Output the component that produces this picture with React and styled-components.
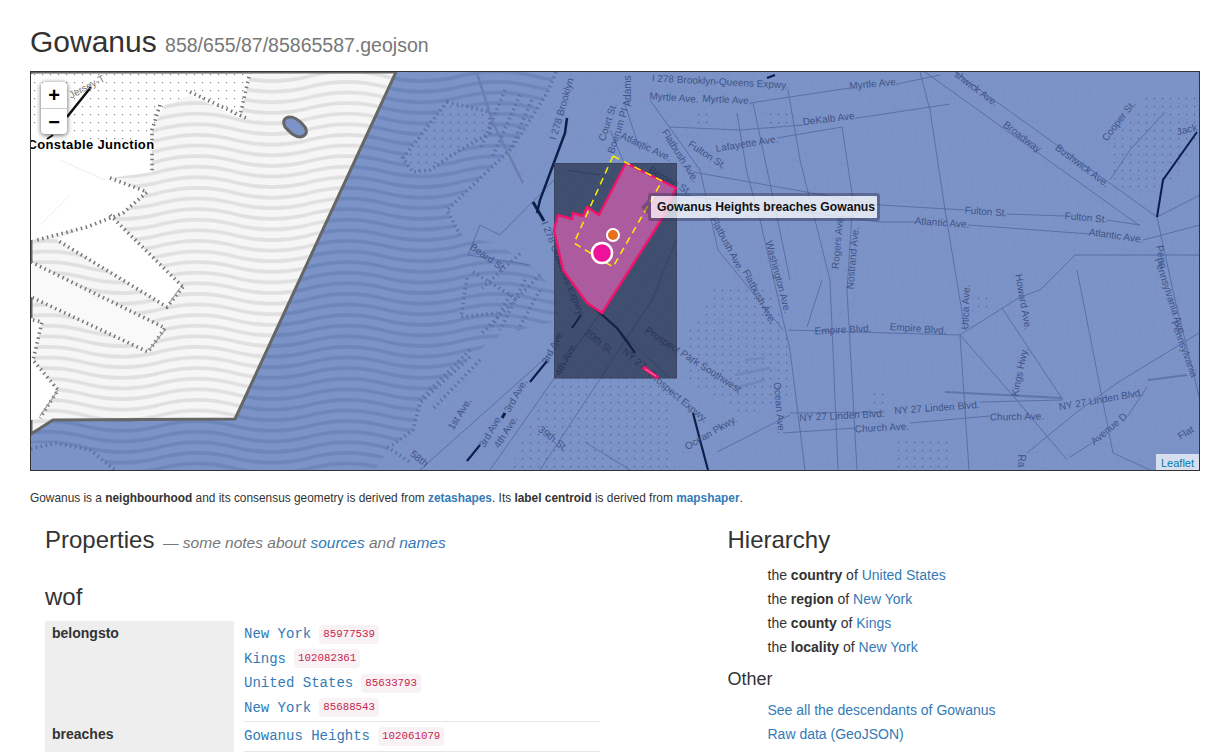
import React from "react";
import styled, { createGlobalStyle } from "styled-components";

const Global = createGlobalStyle`
  html, body { margin: 0; padding: 0; background: #fff; height: 752px; overflow: hidden; }
  body { font-family: "Liberation Sans", Arial, sans-serif; font-size: 14px; line-height: 20px; color: #333; }
`;

const Page = styled.div`
  width: 1170px;
  margin-left: 30px;
`;
const Title = styled.h1`
  margin: 0;
  padding-top: 24px;
  height: 71px;
  box-sizing: border-box;
  font-size: 30px;
  line-height: 36px;
  font-weight: 400;
  color: #333;
`;
const Path = styled.small`
  font-size: 19.5px;
  color: #777;
`;
const MapFrame = styled.div`
  position: relative;
  box-sizing: border-box;
  width: 1170px;
  height: 400px;
  border: 1px solid #333;
  overflow: hidden;
`;
const MapSvg = styled.svg`
  display: block;
  width: 1168px;
  height: 398px;
  font-family: "Liberation Sans", Arial, sans-serif;
`;
const ZoomBox = styled.div`
  position: absolute;
  left: 10px;
  top: 10px;
  width: 26px;
  border-radius: 4px;
  box-shadow: 0 1px 5px rgba(0, 0, 0, 0.65);
  background: #fff;
  overflow: hidden;
`;
const ZoomButton = styled.div`
  height: 25.5px;
  text-align: center;
  font: bold 20px/26px "Liberation Sans", sans-serif;
  color: #000;
  border-bottom: ${(p) => (p.$first ? "1px solid #ccc" : "none")};
`;
const Tip = styled.div`
  position: absolute;
  left: 620px;
  top: 124px;
  height: 22px;
  width: 226px;
  box-sizing: border-box;
  padding-left: 6px;
  font-size: 12.2px;
  font-weight: 700;
  line-height: 22px;
  color: #111;
  white-space: nowrap;
  background: rgba(255, 255, 255, 0.74);
  box-shadow: 0 0 0 3px rgba(50, 55, 90, 0.45);
  border-radius: 1px;
  &::before {
    content: "";
    position: absolute;
    left: -10px;
    top: 4px;
    border: 7px solid transparent;
    border-left-width: 0;
    border-right-color: rgba(50, 55, 90, 0.45);
  }
`;
const Attribution = styled.div`
  position: absolute;
  right: 0;
  bottom: 0;
  height: 16px;
  padding: 0 5px;
  font-size: 11px;
  line-height: 18px;
  color: #0078a8;
  background: rgba(255, 255, 255, 0.7);
`;
const Intro = styled.p`
  margin: 0;
  height: 53px;
  padding-top: 17px;
  box-sizing: border-box;
  font-size: 11.88px;
  line-height: 20px;
  white-space: nowrap;
  color: #333;
  b { font-weight: 700; }
`;
const Link = styled.a`
  color: #337ab7;
  text-decoration: none;
  font-weight: ${(p) => (p.$bold ? 700 : "inherit")};
`;
const Columns = styled.div`
  display: flex;
`;
const LeftCol = styled.section`
  width: 682.5px;
  box-sizing: border-box;
  padding-left: 15px;
`;
const RightCol = styled.section`
  flex: 1;
  padding-left: 15px;
`;
const H2 = styled.h2`
  margin: 0;
  font-size: 24px;
  line-height: 32px;
  font-weight: 400;
  height: 32px;
`;
const Note = styled.small`
  margin-left: 2px;
  font-size: 15.5px;
  font-style: italic;
  color: #777;
`;
const H3 = styled.h3`
  margin: 25px 0 0;
  height: 40px;
  font-size: 24px;
  line-height: 32px;
  font-weight: 400;
`;
const Table = styled.div`
  width: 555px;
  display: grid;
  grid-template-columns: 189px 356px;
  column-gap: 10px;
`;
const Key = styled.div`
  background: #eee;
  padding: 2px 0 0 7px;
  font-weight: 700;
  font-size: 14px;
  line-height: 20px;
  color: #333;
`;
const Cell = styled.div`
  border-bottom: 1px solid #e6e6e6;
  padding-bottom: ${(p) => p.$bottom}px;
  padding-top: ${(p) => p.$top}px;
`;
const Item = styled.div`
  display: flex;
  align-items: center;
  height: 24.5px;
`;
const MonoLink = styled.a`
  font-family: "Liberation Mono", monospace;
  font-size: 14px;
  color: #337ab7;
  text-decoration: none;
`;
const Code = styled.code`
  margin-left: 8px;
  padding: 2px 4px;
  font-family: "Liberation Mono", monospace;
  font-size: 10.8px;
  line-height: 15px;
  color: #c7254e;
  background: #f9f2f4;
  border-radius: 4px;
`;
const SubHead = styled.h4`
  margin: 8px 0 0;
  font-size: 18px;
  line-height: 24px;
  height: 31px;
  font-weight: 400;
`;
const Items = styled.ul`
  list-style: none;
  margin: ${(p) => p.$top}px 0 0;
  padding: 0 0 0 40px;
  li { height: 24px; line-height: 24px; font-size: 14px; white-space: nowrap; }
  b { font-weight: 700; }
`;

const WAVE = (y) => `M0 ${y} q37.5 -10 75 0 t75 0`;
const Waves = ({ id, bg, fg }) => (
  <pattern id={id} width="150" height="10.6" patternUnits="userSpaceOnUse" x="9.5" y="2">
    <rect width="150" height="10.6" fill={bg} />
    {[-10.6, 0, 10.6, 21.2].map((y) => (
      <path key={y} d={WAVE(y)} fill="none" stroke={fg} strokeWidth="3.6" />
    ))}
  </pattern>
);
const Dots = ({ id, color, size = 8 }) => (
  <pattern id={id} width={size} height={size} patternUnits="userSpaceOnUse">
    <rect x="2" y="2" width="1.2" height="1.2" fill={color} />
  </pattern>
);

const thin = [
  "M660 192L880 222L915 222M968 225L1090 234M1143 240L1200 225",
  "M693 172L880 205L965 210M1007 214L1065 216M1107 220L1140 225",
  "M955 72L1157 217M925 72L1140 226",
  "M750 103L850 88M897 84L940 75",
  "M670 127L740 130L803 125M857 118L950 104",
  "M777 138L842 127",
  "M737 113L747 173L760 220L790 350L805 470",
  "M753 103L772 193L790 280",
  "M788 90L800 160L830 280L838 470",
  "M842 127L853 200L847 290L857 470",
  "M822 280L807 327",
  "M960 335L969 470",
  "M960 335L1015 398L1067 460",
  "M960 335L1020 297L1040 290",
  "M1002 308L1063 400",
  "M790 413L885 412M980 402L1062 400",
  "M717 452L790 415M783 433L855 428M910 423L990 416",
  "M1070 457L1092 443M1127 417L1147 387",
  "M1027 453L1077 412L1117 383L1199 333",
  "M1077 270L1113 453L1150 470",
  "M718 250L783 330",
  "M788 330L960 335",
  "M1110 180L1130 150L1165 112",
  "M1157 217L1175 300L1200 400",
  "M1040 290L1075 255L1199 255",
  "M920 72L930 110L945 210L965 330",
  "M1157 217L1200 195",
  "M676 240L652 300L540 470",
  "M600 313L490 470M560 345L420 470",
  "M554 180L500 235L480 225L468 255L530 265",
  "M610 130L625 165M650 100L700 170L718 250",
  "M566 170L600 175M625 105L640 150",
  "M670 378L585 300M585 442L630 470",
];
const thick = [
  { d: "M567 118L565 133L540 200L537 213", w: 2.5 },
  { d: "M533 202L544 221", w: 3 },
  { d: "M588 303L600 313L617 328L628 343L635 353", w: 2.2 },
  { d: "M581 315L572 328", w: 2 },
  { d: "M547 361L530 382", w: 2.2 },
  { d: "M505 413L502 418", w: 3 },
  { d: "M480 445L467 461", w: 2.2 },
  { d: "M693 413L700 440L708 470", w: 2.2 },
  { d: "M1197 132L1163 180L1157 217", w: 2 },
  { d: "M767 78L775 75", w: 2 },
  { d: "M91 87L67 117", w: 2.5, c: "#111" },
  { d: "M53 135L47 139", w: 2, c: "#111" },
];
const labels = [
  ["I 278 Brooklyn-Queens Expwy.", 720, 85, 3],
  ["Myrtle Ave.", 674, 101, 4],
  ["Myrtle Ave.", 727, 103, 3],
  ["Myrtle Ave.", 874, 87, -5],
  ["DeKalb Ave.", 830, 122, -7],
  ["Lafayette Ave.", 747, 147, -9],
  ["Fulton St.", 707, 158, 33],
  ["Flatbush Ave.", 680, 159, 58],
  ["Atlantic Ave.", 646, 150, 25],
  ["Bergen St.", 670, 184, 30],
  ["Court St.", 608, 125, -72],
  ["Boerum Pl", 618, 134, -72],
  ["Adams", 628, 94, -90],
  ["I 278 Brooklyn", 562, 112, -74],
  ["Broadway", 1022, 140, 37],
  ["Bushwick Ave.", 1082, 169, 37],
  ["shwick Ave.", 976, 92, 37],
  ["Cooper St.", 1119, 124, -52],
  ["Jack", 1187, 133, -15],
  ["Fulton St.", 986, 215, 4],
  ["Fulton St.", 1086, 221, 5],
  ["Atlantic Ave.", 942, 226, 4],
  ["Atlantic Ave.", 1116, 239, 8],
  ["Utica Ave.", 966, 310, -88],
  ["Rogers Ave.", 838, 245, -85],
  ["Nostrand Ave.", 853, 261, -85],
  ["Washington Ave.", 778, 280, 75],
  ["Flatbush Ave.", 759, 300, 62],
  ["Flatbush Ave.", 727, 247, 62],
  ["Empire Blvd.", 843, 333, -3],
  ["Empire Blvd.", 918, 332, 4],
  ["Howard Ave.", 1023, 305, 80],
  ["Kings Hwy.", 1020, 375, -78],
  ["Ocean Ave.", 779, 411, 85],
  ["Prospect Park Southwest", 693, 363, 33],
  ["Ocean Pkwy.", 711, 436, -30],
  ["NY 27 Linden Blvd.", 842, 419, -3],
  ["NY 27 Linden Blvd.", 937, 411, -4],
  ["NY 27 Linden Blvd.", 1101, 403, -10],
  ["Church Ave.", 882, 431, -3],
  ["Church Ave.", 1017, 420, -1],
  ["Avenue D", 1109, 432, -40],
  ["Pennsylvania Ave.", 1170, 300, 72],
  ["Pennsylvania", 1184, 352, 70],
  ["Penn", 1161, 260, 80],
  ["Flat", 1186, 436, -30],
  ["Ra", 1021, 464, 90],
  ["1st Ave.", 460, 417, -58],
  ["3rd Ave.", 553, 350, -63],
  ["4th Ave.", 566, 362, -62],
  ["20th St.", 599, 345, 38],
  ["NY 27", 634, 362, 40],
  ["3rd Ave.", 516, 399, -60],
  ["3rd Ave.", 491, 434, -60],
  ["4th Ave.", 506, 435, -58],
  ["39th St.", 553, 442, 38],
  ["Prospect Expwy.", 678, 400, 40],
  ["58th", 419, 462, 38],
  ["Beard St.", 488, 261, 35],
  ["I 278 Gowanus Expwy.", 563, 272, 68],
];
const hatches = [
  "M447 102L490 112L490 133L460 150L430 170L413 172L403 158Z",
  "M556 72L547 93L513 147L447 210L460 235",
  "M470 357L420 403L413 430L390 447",
  "M467 278L461 317L497 313",
  "M473 272L515 298M520 254L482 288",
  "M505 90L480 150M520 95L492 158M532 100L510 150",
  "M525 280L500 330M540 290L518 330M510 295L490 330",
  "M470 350L420 400M480 360L432 410",
  "M31 449L55 443L90 450L115 470",
  "M387 447L410 462",
  "M540 275L480 335",
];
const westHatches = [
  "M110 215L183 287M183 287L167 307L57 240",
  "M31 262L165 328L148 352L31 297",
  "M33 320L42 322L33 360L58 390L40 418",
  "M250 72L240 116M190 92L246 118",
  "M160 105L152 130L152 172",
  "M110 178L147 192L123 213L87 227L37 240",
];

const MapDrawing = () => (
  <MapSvg viewBox="31 72 1168 398">
    <defs>
      <Waves id="water" bg="#7b93c7" fg="#6c85bb" />
      <Waves id="westland" bg="#f6f6f6" fg="#e0e0e0" />
      <Dots id="blueDots" color="#4a5f95" />
      <Dots id="grayDots" color="#888" />
      <pattern id="gridE" width="12" height="15" patternUnits="userSpaceOnUse" patternTransform="rotate(5)">
        <path d="M0 0H12M0 0V15" stroke="#7088bd" strokeWidth="0.6" fill="none" />
      </pattern>
      <pattern id="gridW" width="12" height="15" patternUnits="userSpaceOnUse" patternTransform="rotate(-55)">
        <path d="M0 0H12M0 0V15" stroke="#7289bd" strokeWidth="0.6" fill="none" />
      </pattern>
    </defs>

    <rect x="31" y="72" width="1168" height="398" fill="url(#water)" />

    <path
      d="M556 72L547 93L513 147L447 210L460 235L500 245L535 270L555 290L560 320L500 335L470 357L420 403L413 430L390 447L375 470H1199V72Z"
      fill="#7b93c7"
    />
    <path d="M447 102L490 112L490 133L460 150L430 170L413 172L403 158Z" fill="#7b93c7" />
    <path d="M31 443L55 443L90 450L115 470H31Z" fill="#7b93c7" />
    <rect x="680" y="72" width="519" height="398" fill="url(#gridE)" />
    <path d="M556 72L513 147L447 210L460 235L500 245L555 290L560 320L500 335L420 403L390 447L375 470H680V72Z" fill="url(#gridW)" />

    <path d="M717 285L770 290L790 340V400L745 415L683 380L690 330Z" fill="url(#blueDots)" />
    <path d="M555 378H665L675 470H510L525 432Z" fill="url(#blueDots)" />
    <rect x="893" y="441" width="57" height="29" fill="url(#blueDots)" />
    <rect x="977" y="297" width="17" height="16" fill="url(#blueDots)" />
    <path d="M1113 140L1150 93H1197V140L1165 193H1113Z" fill="url(#blueDots)" />
    <rect x="692" y="108" width="21" height="17" fill="url(#blueDots)" />
    <rect x="763" y="112" width="25" height="13" fill="url(#blueDots)" />
    <rect x="873" y="393" width="12" height="14" fill="url(#blueDots)" />
    <path d="M447 102L490 112L490 133L460 150L430 170L413 172L403 158Z" fill="url(#blueDots)" />

    <path d="M31 72H396L235 419L53 420L31 434Z" fill="url(#westland)" stroke="#666" strokeWidth="3" />
    <path d="M31 74H250L240 118L190 95L165 105L152 130V172L110 178L147 192L123 213L87 227L31 240Z" fill="#fff" />
    <path d="M31 74H250L240 118L190 95L165 105L152 130L110 150L60 125L31 130Z" fill="url(#grayDots)" />
    <path d="M110 215L183 287L167 307L57 240Z" fill="#fff" />
    <path d="M31 262L165 328L148 352L31 297Z" fill="#f9f9f9" />
    <path d="M31 318L42 322L33 360L58 390L40 418L31 420Z" fill="#fff" />
    <path d="M60 160L105 180M70 195L40 225M100 265L125 280M60 275L100 300" stroke="#e6e6e6" strokeWidth="0.7" fill="none" />
    {westHatches.map((d) => (
      <path key={d} d={d} fill="none" stroke="#777" strokeWidth="3.6" strokeDasharray="1.5 3.5" />
    ))}
    <path d="M180 288L170 302M165 330L149 350M58 390L40 416" stroke="#999" strokeWidth="1.2" fill="none" />
    <path
      d="M286 118C292 115 300 120 305 127C308 132 306 136 300 137C293 136 290 132 285 127C283 123 283 120 286 118Z"
      fill="#7b93c7"
      stroke="#666"
      strokeWidth="3"
    />

    {hatches.map((d) => (
      <path key={d} d={d} fill="none" stroke="#5a71a8" strokeWidth="3.6" strokeDasharray="1.5 3.5" />
    ))}
    <path d="M477 73L493 123L523 183" fill="none" stroke="#6a7fae" strokeWidth="2.5" />
    <path d="M945 392L1062 398M1148 380L1187 375" fill="none" stroke="#5f76ac" strokeWidth="2.2" />
    <path d="M745 360L765 358M735 375L770 368M735 388L765 380" fill="none" stroke="#6f87ba" strokeWidth="2.4" />

    {thin.map((d) => (
      <path key={d} d={d} fill="none" stroke="#566ca3" strokeWidth="0.9" />
    ))}
    {thick.map((r) => (
      <path key={r.d} d={r.d} fill="none" stroke={r.c || "#0d1f4a"} strokeWidth={r.w} />
    ))}
    {labels.map(([t, x, y, r], i) => (
      <text key={i} x={x} y={y} textAnchor="middle" fontSize="10" fill="#3f5488" transform={`rotate(${r} ${x} ${y - 3})`}>
        {t}
      </text>
    ))}
    <text x="87" y="90" textAnchor="middle" fontSize="10" fill="#777" transform="rotate(-28 87 87)">
      Jersey-T
    </text>
    <text x="91" y="149" textAnchor="middle" fontSize="13" fontWeight="700" fill="#000" stroke="#fff" strokeWidth="2.5" paintOrder="stroke" letterSpacing="0.35">
      Constable Junction
    </text>

    <rect x="554.5" y="163.5" width="122" height="214.5" fill="rgba(28,36,58,0.62)" stroke="#3a4560" />
    <path
      d="M626 163L676 188L663 217L602 313L587 303L563 270L554 230L558 215L572 219L573 213L583 216L587 207L599 215Z"
      fill="rgba(212,96,176,0.74)"
      stroke="#f0146a"
      strokeWidth="2.4"
      strokeLinejoin="round"
    />
    <path d="M613 156L662 181L613 267L574 243Z" fill="none" stroke="#ffee00" strokeWidth="1.5" strokeDasharray="7 5" />
    <path d="M643 367L658 378" stroke="#f0146a" strokeWidth="4" />
    <path d="M645 369L656 376" stroke="#f783b0" strokeWidth="1" />
    <circle cx="613" cy="235" r="6" fill="#ea6f1c" stroke="#fff" strokeWidth="2" />
    <circle cx="602" cy="253" r="10" fill="#ee1199" stroke="#fff" strokeWidth="2.6" />
  </MapSvg>
);

const belongs = [
  ["New York", "85977539"],
  ["Kings", "102082361"],
  ["United States", "85633793"],
  ["New York", "85688543"],
];
const hierarchy = [
  ["country", "United States"],
  ["region", "New York"],
  ["county", "Kings"],
  ["locality", "New York"],
];

export default function App() {
  return (
    <Page>
      <Global />
      <Title>
        Gowanus <Path>858/655/87/85865587.geojson</Path>
      </Title>
      <MapFrame>
        <MapDrawing />
        <ZoomBox>
          <ZoomButton $first>+</ZoomButton>
          <ZoomButton>−</ZoomButton>
        </ZoomBox>
        <Tip>Gowanus Heights breaches Gowanus</Tip>
        <Attribution>Leaflet</Attribution>
      </MapFrame>
      <Intro>
        Gowanus is a <b>neighbourhood</b> and its consensus geometry is derived from <Link $bold>zetashapes</Link>. Its{" "}
        <b>label centroid</b> is derived from <Link $bold>mapshaper</Link>.
      </Intro>
      <Columns>
        <LeftCol>
          <H2>
            Properties <Note>— some notes about <Link>sources</Link> and <Link>names</Link></Note>
          </H2>
          <H3>wof</H3>
          <Table>
            <Key>belongsto</Key>
            <Cell $top={1} $bottom={1}>
              {belongs.map(([name, id]) => (
                <Item key={id}>
                  <MonoLink>{name}</MonoLink>
                  <Code>{id}</Code>
                </Item>
              ))}
            </Cell>
            <Key>breaches</Key>
            <Cell $top={2} $bottom={2}>
              <Item>
                <MonoLink>Gowanus Heights</MonoLink>
                <Code>102061079</Code>
              </Item>
            </Cell>
          </Table>
        </LeftCol>
        <RightCol>
          <H2>Hierarchy</H2>
          <Items $top={7}>
            {hierarchy.map(([k, v]) => (
              <li key={k}>
                the <b>{k}</b> of <Link>{v}</Link>
              </li>
            ))}
          </Items>
          <SubHead>Other</SubHead>
          <Items $top={0}>
            <li>
              <Link>See all the descendants of Gowanus</Link>
            </li>
            <li>
              <Link>Raw data (GeoJSON)</Link>
            </li>
          </Items>
        </RightCol>
      </Columns>
    </Page>
  );
}
